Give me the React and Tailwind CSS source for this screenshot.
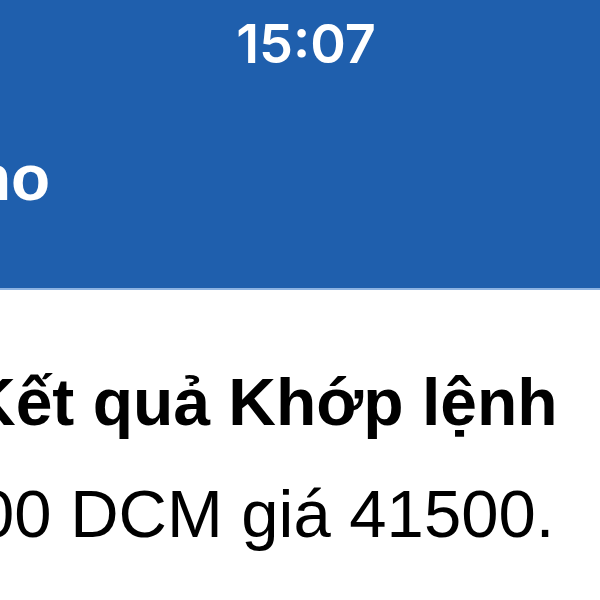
import React from 'react';

export default function App() {
    return (
        <div className="w-[600px] h-[600px] overflow-hidden bg-white font-['Liberation_Sans',Arial,sans-serif]">
            {/* Header */}
            <div className="h-[288px] bg-[#1f5fad] text-white flex flex-col">
                <div className="pt-[17px] pl-[12px] text-center text-[54px] leading-none font-semibold font-['Inter',sans-serif]">
                    15:07
                </div>
                <div className="mt-[75px] ml-[-28px] text-[64px] leading-none font-bold whitespace-nowrap">
                    ho
                </div>
            </div>
            <div className="h-[2px] bg-[#8db3e2]" />

            {/* Notification body */}
            <div className="pt-[79px] text-black whitespace-nowrap">
                <div className="ml-[-32px] text-[66px] leading-none font-bold">
                    Kết quả Khớp lệnh
                </div>
                <div className="mt-[45px] ml-[-23px] text-[67px] leading-none">
                    00 DCM giá 41500.
                </div>
            </div>
        </div>
    );
}
